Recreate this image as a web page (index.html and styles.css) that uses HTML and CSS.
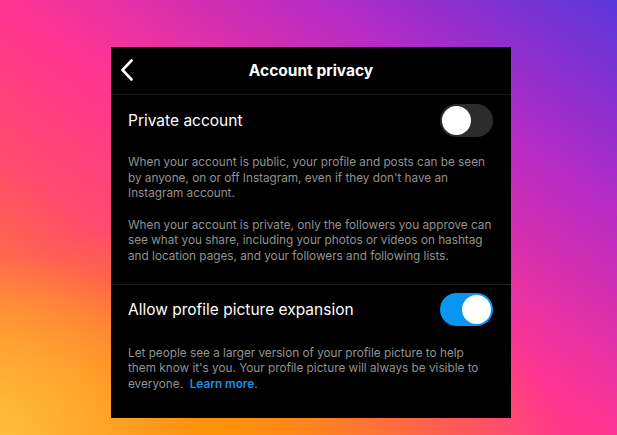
FILE: index.html
```html
<!DOCTYPE html>
<html>

<head>
    <meta charset="utf-8">
    <meta name="viewport" content="width=device-width,initial-scale=1.0">
    <title>Account privacy</title>
    <link rel="stylesheet" href="styles.css">
</head>

<body>
    <div id="wrap">
        <div class="panel">
            <div class="header">
                <div class="back">
                    <svg width="14" height="22" viewBox="0 0 14 22">
                        <path d="M11.5 1.5 L2.5 11 L11.5 20.5" fill="none" stroke="#fff" stroke-width="2.6"
                            stroke-linecap="round" stroke-linejoin="round" />
                    </svg>
                </div>
                <div class="title">Account privacy</div>
            </div>

            <div class="section">
                <div class="row">
                    <div class="label">Private account</div>
                    <div class="toggle"></div>
                </div>
                <p class="desc">When your account is public, your profile and posts can be seen by anyone, on or off Instagram, even if they don't have an Instagram account.</p>
                <p class="desc">When your account is private, only the followers you approve can see what you share, including your photos or videos on hashtag and location pages, and your followers and following lists.</p>
            </div>

            <div class="section last">
                <div class="row">
                    <div class="label">Allow profile picture expansion</div>
                    <div class="toggle on"></div>
                </div>
                <p class="desc">Let people see a larger version of your profile picture to help them&nbsp;know it's you. Your profile picture will always be visible to everyone.&nbsp; <a href="#" class="link">Learn more</a>.</p>
            </div>
        </div>
    </div>
</body>

</html>
```

FILE: styles.css
```css
html,
body {
    margin: 0;
    padding: 0;
    height: 100%;
}

body {
    font-family: Inter, "Liberation Sans", Arial, sans-serif;
    background:
        radial-gradient(ellipse 32% 42% at 0% 100%, rgba(255, 190, 60, 0.95) 0%, rgba(255, 190, 60, 0) 100%),
        radial-gradient(ellipse 55% 50% at 35% 100%, rgba(255, 148, 8, 1) 0%, rgba(255, 140, 20, 0) 100%),
        linear-gradient(to bottom left, #5a36d9 0%, #b52bc5 24%, #ff3592 50%, #ff4a6c 68%, #ff7a3a 86%, #ffa632 100%);
    overflow: hidden;
}

#wrap {
    padding: 47px 0 0 111px;
}

.panel {
    width: 400px;
    height: 371px;
    background: #000;
    color: #fff;
}

.header {
    height: 47px;
    display: flex;
    align-items: center;
    justify-content: center;
    position: relative;
    border-bottom: 1px solid #161616;
}

.back {
    position: absolute;
    left: 9px;
    top: 12px;
}

.title {
    font-size: 15.5px;
    font-weight: 700;
}

.section {
    padding: 0 17px 19px 17px;
    border-bottom: 1px solid #1e1e1e;
}

.section.last {
    border-bottom: none;
}

.row {
    height: 50px;
    display: flex;
    align-items: center;
    justify-content: space-between;
}

.label {
    font-size: 15.5px;
}

.toggle {
    width: 53px;
    height: 33px;
    margin-right: 1px;
    border-radius: 17px;
    background: #2c2c2e;
    position: relative;
}

.toggle::after {
    content: "";
    position: absolute;
    left: 2px;
    top: 2px;
    width: 29px;
    height: 29px;
    border-radius: 50%;
    background: #fff;
}

.toggle.on {
    background: #0a95f2;
}

.toggle.on::after {
    left: 22px;
}

.desc {
    margin: 10px 0 0;
    font-size: 11.75px;
    line-height: 15.6px;
    color: #929292;
}

.desc+.desc {
    margin-top: 16px;
}

.last .desc {
    margin-top: 11px;
}

.link {
    color: #1d8fe3;
    font-weight: 600;
    text-decoration: none;
}
```
